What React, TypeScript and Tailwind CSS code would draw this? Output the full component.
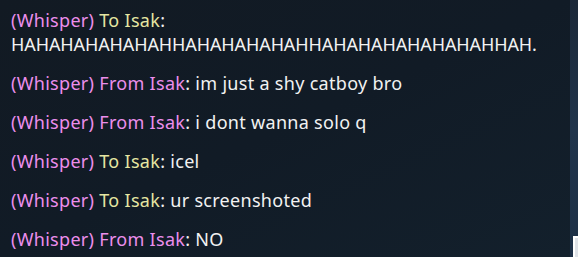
const messages = [
  { dir: "To", text: "HAHAHAHAHAHAHHAHAHAHAHAHHAHAHAHAHAHAHAHHAH.", wrap: true },
  { dir: "From", text: "im just a shy catboy bro" },
  { dir: "From", text: "i dont wanna solo q" },
  { dir: "To", text: "icel" },
  { dir: "To", text: "ur screenshoted" },
  { dir: "From", text: "NO" },
];

function Whisper({ dir, text, wrap }: { dir: string; text: string; wrap?: boolean }) {
  const isTo = dir === "To";
  return (
    <p className="leading-[24px]">
      <span className="text-[#ec8eec]">(Whisper) </span>
      <span className={isTo ? "text-[#e6e6a2]" : "text-[#ec8eec]"}>
        {dir} Isak
      </span>
      <span className="text-[#f2f2f2]">:</span>
      {wrap ? <br /> : " "}
      <span className={wrap ? "tracking-[-0.1px] text-[#f2f2f2]" : "text-[#f2f2f2]"}>{text}</span>
    </p>
  );
}

export default function App() {
  return (
    <div className="flex h-[257px] w-[578px] overflow-hidden bg-[#111a24]">
      {/* Chat */}
      <div
        className="flex flex-1 flex-col gap-[15px] bg-gradient-to-br from-[#121a23] via-[#111b26] to-[#13202c] pl-[11px] pt-[8px] text-[18px] tracking-[0.3px] whitespace-nowrap"
        style={{ fontFamily: '"Noto Sans", "Open Sans", sans-serif' }}
      >
        {messages.map((m, i) => (
          <Whisper key={i} dir={m.dir} text={m.text} wrap={m.wrap} />
        ))}
      </div>

      {/* Right strip */}
      <div className="flex w-[8px] flex-col justify-end bg-gradient-to-b from-[#1b2838] via-[#20344b] to-[#1d3046]">
        <div className="ml-[3px] h-[21px] border-l-2 border-t-2 border-white bg-[#dfe3e8]" />
      </div>
    </div>
  );
}
